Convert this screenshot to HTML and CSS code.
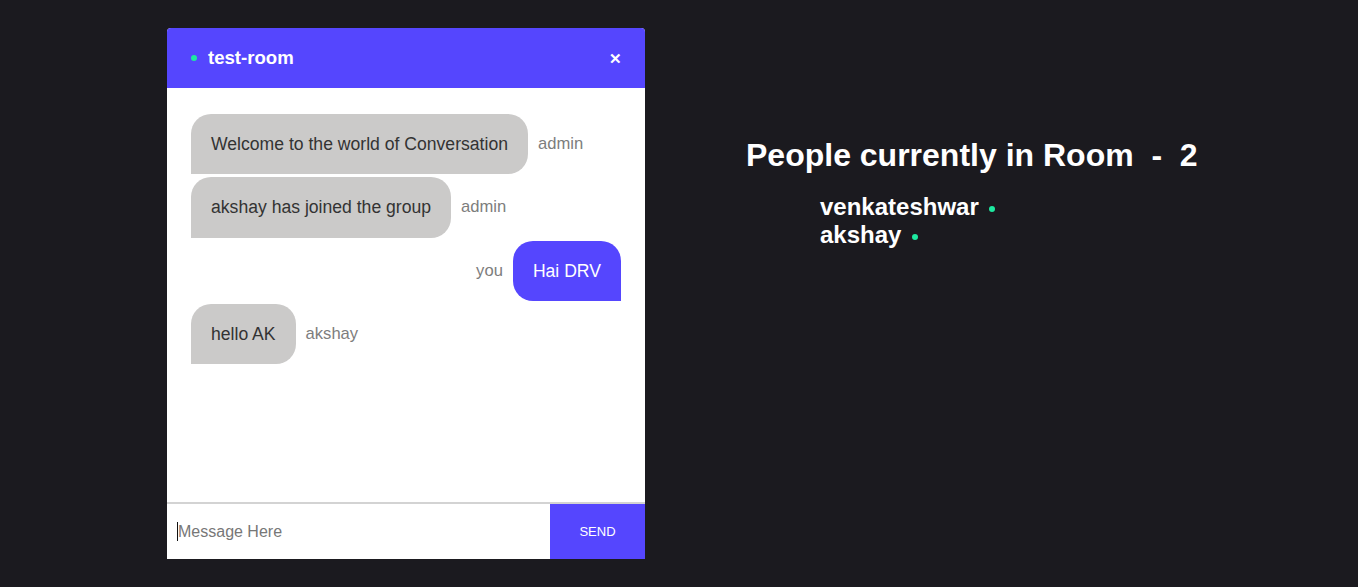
FILE: index.html
```html
<!DOCTYPE html>
<html>
<head>
<meta charset="utf-8">
<link rel="stylesheet" href="styles.css">
</head>
<body>
<div class="page">
  <div class="chat">
    <div class="chat-header">
      <div class="room"><span class="dot"></span><span class="room-name">test-room</span></div>
      <span class="close">&#x2715;</span>
    </div>
    <div class="messages">
      <div class="msg other"><div class="bubble">Welcome to the world of Conversation</div><span class="author">admin</span></div>
      <div class="msg other"><div class="bubble">akshay has joined the group</div><span class="author">admin</span></div>
      <div class="msg mine"><span class="author">you</span><div class="bubble">Hai DRV</div></div>
      <div class="msg other"><div class="bubble">hello AK</div><span class="author">akshay</span></div>
    </div>
    <div class="composer">
      <div class="input-wrap">
        <input class="input" type="text" placeholder="Message Here">
        <span class="caret"></span>
      </div>
      <button class="send">SEND</button>
    </div>
  </div>
  <div class="people">
    <h2 class="people-title">People currently in Room &nbsp;- &nbsp;2</h2>
    <ul class="people-list">
      <li>venkateshwar <span class="dot"></span></li>
      <li>akshay <span class="dot"></span></li>
    </ul>
  </div>
</div>
</body>
</html>
```
FILE: styles.css
```css
html, body {
  margin: 0;
  padding: 0;
  background: #1b1a1f;
  font-family: "Liberation Sans", Arial, sans-serif;
}
.page {
  display: flex;
  align-items: flex-start;
  padding: 28px 0 0 167px;
  height: 587px;
  box-sizing: border-box;
}
.chat {
  width: 478px;
  height: 531px;
  display: flex;
  flex-direction: column;
  background: #fff;
  border-radius: 4px 4px 0 0;
  overflow: hidden;
}
.chat-header {
  height: 60px;
  flex: none;
  background: #5546fe;
  display: flex;
  align-items: center;
  justify-content: space-between;
  padding: 0 23px 0 24px;
  color: #fff;
}
.room {
  display: flex;
  align-items: center;
}
.dot {
  display: inline-block;
  width: 6px;
  height: 6px;
  border-radius: 50%;
  background: #1de9a0;
}
.room .dot {
  margin-right: 11px;
}
.room-name {
  font-weight: bold;
  font-size: 18.6px;
}
.close {
  font-size: 15px;
  font-weight: bold;
  margin-top: 2px;
}
.messages {
  flex: 1;
  padding: 26px 24px 0 24px;
  display: flex;
  flex-direction: column;
  gap: 3px;
}
.msg {
  display: flex;
  align-items: center;
}
.msg.mine {
  justify-content: flex-end;
}
.bubble {
  padding: 20px 20px;
  font-size: 17.6px;
  line-height: 20.3px;
  border-radius: 20px;
}
.other .bubble {
  background: #cbcac9;
  color: #333;
  border-bottom-left-radius: 0;
}
.mine .bubble {
  background: #5546fe;
  color: #fff;
  border-bottom-right-radius: 0;
}
.author {
  color: #7d7d7d;
  font-size: 16.6px;
}
.other .author { margin-left: 10px; }
.mine .author { margin-right: 10px; }
.composer {
  flex: none;
  height: 57px;
  border-top: 2px solid #d3d3d3;
  box-sizing: border-box;
  display: flex;
}
.input-wrap {
  flex: 1;
  position: relative;
  display: flex;
}
.input {
  flex: 1;
  border: none;
  outline: none;
  padding: 0 10px 0 11px;
  font-family: "Liberation Sans", Arial, sans-serif;
  font-size: 16px;
  color: #333;
}
.input::placeholder {
  color: #777;
}
.caret {
  position: absolute;
  left: 10px;
  top: 18px;
  width: 1px;
  height: 19px;
  background: #111;
}
.send {
  width: 95px;
  border: none;
  background: #5546fe;
  color: #fff;
  font-family: "Liberation Sans", Arial, sans-serif;
  font-size: 13px;
}
.people {
  margin-left: 101px;
  margin-top: 107px;
  color: #fff;
}
.people-title {
  margin: 0;
  font-size: 32px;
  font-weight: bold;
  line-height: 40px;
}
.people-list {
  list-style: none;
  margin: 18px 0 0 0;
  padding-left: 74px;
}
.people-list li {
  font-size: 24px;
  font-weight: bold;
  line-height: 28px;
}
.people-list .dot {
  vertical-align: middle;
  margin-left: 4px;
}
```
